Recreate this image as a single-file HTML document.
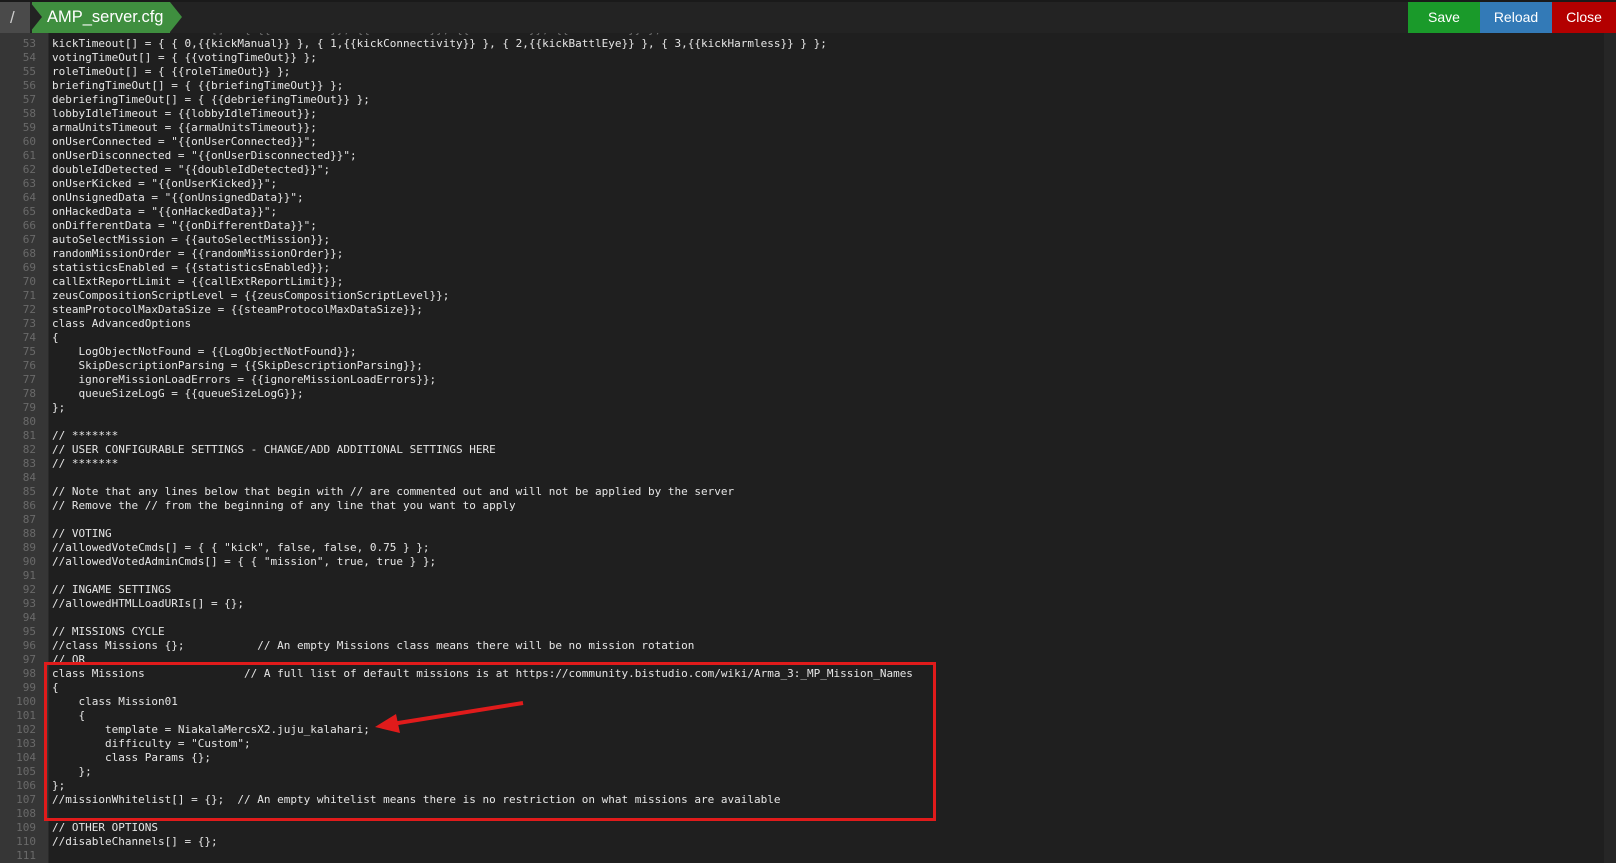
<!DOCTYPE html>
<html><head><meta charset="utf-8"><style>
html,body{margin:0;padding:0;width:1616px;height:863px;overflow:hidden;background:#1f1f1f;font-family:"Liberation Sans",sans-serif}
#hdr{position:absolute;left:0;top:0;width:1616px;height:33px;background:#232323;z-index:5;border-top:2px solid #1a1a1a;box-sizing:border-box}
.crumb1{position:absolute;left:0;top:0;height:31px;width:30px;background:#4a4a4a;color:#ccc;font-size:17px;line-height:31px;padding-left:10px;box-sizing:border-box}
.crumb1:after{content:"";position:absolute;right:-12px;top:0;border-left:12px solid #4a4a4a;border-top:15.5px solid transparent;border-bottom:15.5px solid transparent}
.crumb2{position:absolute;left:32px;top:0;height:31px;width:138px;background:#3f8f3f;color:#fff;font-size:16.5px;line-height:31px;padding-left:15px;box-sizing:border-box;white-space:nowrap}
.crumb2:before{content:"";position:absolute;left:-2px;top:0;border-left:12px solid #232323;border-top:15.5px solid transparent;border-bottom:15.5px solid transparent}
.crumb2:after{content:"";position:absolute;right:-12px;top:0;border-left:12px solid #3f8f3f;border-top:15.5px solid transparent;border-bottom:15.5px solid transparent}
.btn{position:absolute;top:0;height:31px;color:#fff;font-size:14px;line-height:30px;text-align:center;box-sizing:border-box}
#gut{position:absolute;left:0;top:0;width:48px;height:863px;background:#363636;border-right:1px solid #2a2a2a}
#code{position:absolute;left:0;top:23px;margin:0;font-family:"DejaVu Sans Mono","Liberation Mono",monospace;font-size:11px;line-height:14px;color:#e6e6e6;white-space:pre}
#code div{position:relative;height:14px}
#code .n{position:absolute;left:0;width:36px;text-align:right;color:#6a6a6a}
#code .t{position:absolute;left:52px}
#sb{position:absolute;left:1604px;top:33px;width:12px;height:830px;background:#262626}
#box{position:absolute;left:44px;top:662px;width:892px;height:159px;border:3px solid #e01b1b;box-sizing:border-box}
</style></head><body>
<div id="gut"></div>
<pre id="code"></pre>
<div id="sb"></div>
<div id="box"></div>
<svg style="position:absolute;left:0;top:0" width="1616" height="863"><line x1="523" y1="703" x2="392" y2="724" stroke="#e01b1b" stroke-width="4"/><polygon points="375,727 396,714 400,733" fill="#e01b1b"/></svg>
<div id="hdr">
<div class="crumb1">/</div>
<div class="crumb2">AMP_server.cfg</div>
<div class="btn" style="left:1408px;width:72px;background:#1a9a2a">Save</div>
<div class="btn" style="left:1480px;width:72px;background:#337ab7">Reload</div>
<div class="btn" style="left:1552px;width:64px;background:#b30000">Close</div>
</div>
<script>
var L=[
'kickClientsOnSlowNetwork[] = { {{kickSlow0}}, {{kickSlow1}}, {{kickSlow2}}, {{kickSlow3}} };',
'kickTimeout[] = { { 0,{{kickManual}} }, { 1,{{kickConnectivity}} }, { 2,{{kickBattlEye}} }, { 3,{{kickHarmless}} } };',
'votingTimeOut[] = { {{votingTimeOut}} };',
'roleTimeOut[] = { {{roleTimeOut}} };',
'briefingTimeOut[] = { {{briefingTimeOut}} };',
'debriefingTimeOut[] = { {{debriefingTimeOut}} };',
'lobbyIdleTimeout = {{lobbyIdleTimeout}};',
'armaUnitsTimeout = {{armaUnitsTimeout}};',
'onUserConnected = "{{onUserConnected}}";',
'onUserDisconnected = "{{onUserDisconnected}}";',
'doubleIdDetected = "{{doubleIdDetected}}";',
'onUserKicked = "{{onUserKicked}}";',
'onUnsignedData = "{{onUnsignedData}}";',
'onHackedData = "{{onHackedData}}";',
'onDifferentData = "{{onDifferentData}}";',
'autoSelectMission = {{autoSelectMission}};',
'randomMissionOrder = {{randomMissionOrder}};',
'statisticsEnabled = {{statisticsEnabled}};',
'callExtReportLimit = {{callExtReportLimit}};',
'zeusCompositionScriptLevel = {{zeusCompositionScriptLevel}};',
'steamProtocolMaxDataSize = {{steamProtocolMaxDataSize}};',
'class AdvancedOptions',
'{',
'    LogObjectNotFound = {{LogObjectNotFound}};',
'    SkipDescriptionParsing = {{SkipDescriptionParsing}};',
'    ignoreMissionLoadErrors = {{ignoreMissionLoadErrors}};',
'    queueSizeLogG = {{queueSizeLogG}};',
'};',
'',
'// *******',
'// USER CONFIGURABLE SETTINGS - CHANGE/ADD ADDITIONAL SETTINGS HERE',
'// *******',
'',
'// Note that any lines below that begin with // are commented out and will not be applied by the server',
'// Remove the // from the beginning of any line that you want to apply',
'',
'// VOTING',
'//allowedVoteCmds[] = { { "kick", false, false, 0.75 } };',
'//allowedVotedAdminCmds[] = { { "mission", true, true } };',
'',
'// INGAME SETTINGS',
'//allowedHTMLLoadURIs[] = {};',
'',
'// MISSIONS CYCLE',
'//class Missions {};           // An empty Missions class means there will be no mission rotation',
'// OR',
'class Missions               // A full list of default missions is at https://community.bistudio.com/wiki/Arma_3:_MP_Mission_Names',
'{',
'    class Mission01',
'    {',
'        template = NiakalaMercsX2.juju_kalahari;',
'        difficulty = "Custom";',
'        class Params {};',
'    };',
'};',
'//missionWhitelist[] = {};  // An empty whitelist means there is no restriction on what missions are available',
'',
'// OTHER OPTIONS',
'//disableChannels[] = {};',
''];
var h='';
for(var i=0;i<L.length;i++){var n=52+i;var s=L[i].replace(/&/g,'&amp;').replace(/</g,'&lt;');
h+='<div'+(n==111?' style="background:#262626"':'')+'><span class="n">'+n+'</span><span class="t"'+(n==52?' style="opacity:.4"':'')+'>'+s+'</span></div>';}
document.getElementById('code').innerHTML=h;
</script>
</body></html>
